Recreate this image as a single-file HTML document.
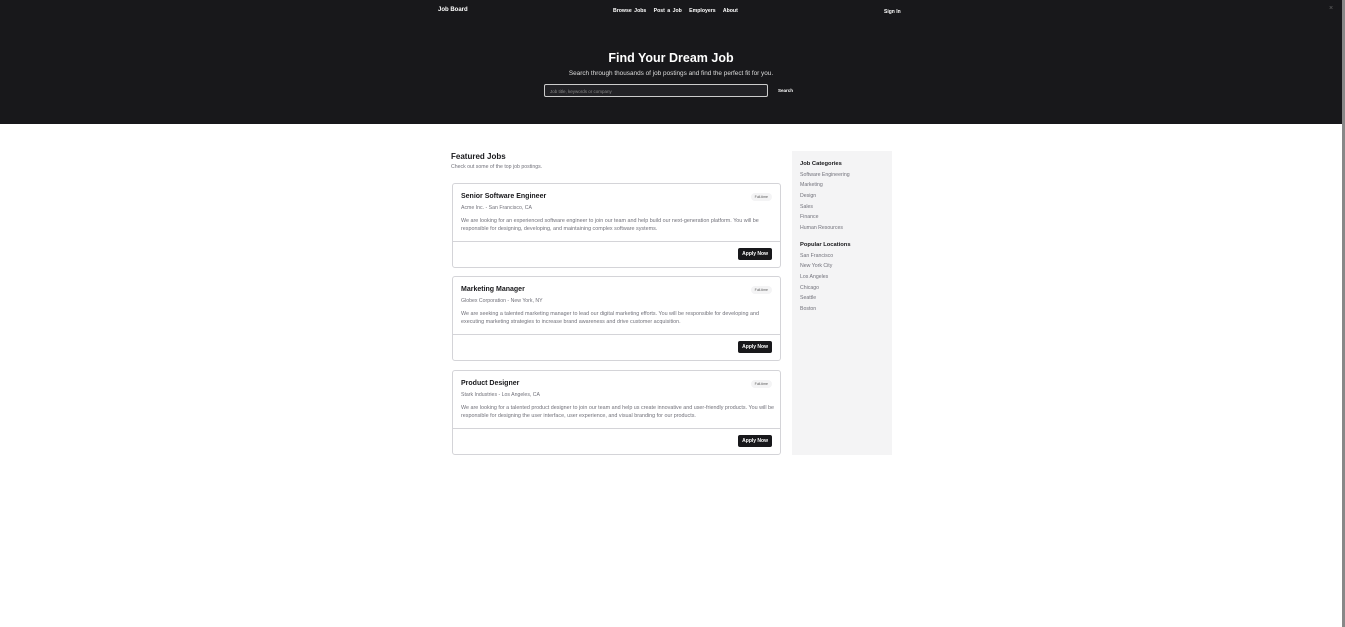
<!DOCTYPE html>
<html><head><meta charset="utf-8"><style>
*{margin:0;padding:0;box-sizing:border-box}
body{width:1345px;height:627px;background:#fff;font-family:"Liberation Sans",sans-serif;position:relative;overflow:hidden}
.hdr{position:absolute;left:0;top:0;width:1342px;height:124px;background:#18181b;color:#fff}
.sb{position:absolute;left:1342px;top:0;width:3px;height:627px;background:#888}
.a{position:absolute;white-space:nowrap}
.card{position:absolute;left:452px;width:329px;height:85px;border:1px solid #d4d4d8;border-radius:3px;background:#fff}
.card .t{position:absolute;left:8px;top:9px;font-size:7px;font-weight:bold;color:#18181b}
.card .c{position:absolute;left:8px;top:21px;font-size:5.2px;color:#71717a}
.card .d{position:absolute;left:8px;top:33px;width:315px;font-size:5.4px;line-height:8px;color:#71717a}
.card .bd{position:absolute;right:8px;top:9px;font-size:3.5px;background:#f4f4f5;border-radius:4px;padding:2px 4px;color:#555}
.card .ln{position:absolute;left:0;right:0;top:57px;border-top:1px solid #d4d4d8}
.card .btn{position:absolute;right:8px;top:64px;background:#18181b;color:#fff;font-size:5px;font-weight:bold;padding:3px 4px;border-radius:2px}
.side{position:absolute;left:792px;top:151px;width:100px;height:304px;background:#f4f4f5}
.side div{position:absolute;left:8px;font-size:5.2px;color:#71717a}
.side .h{font-size:5.8px;font-weight:bold;color:#18181b}
</style></head><body>
<div class="hdr">
<div class="a" style="left:438px;top:7px;font-size:6px;font-weight:bold">Job Board</div>
<div class="a" style="left:613px;top:8px;font-size:5.2px;font-weight:bold;word-spacing:1px">Browse Jobs &nbsp; Post a Job &nbsp; Employers &nbsp; About</div>
<div class="a" style="left:884px;top:9px;font-size:5px;font-weight:bold">Sign In</div>
<div class="a" style="left:1329px;top:5px;font-size:7px;color:#666">×</div>
<div class="a" style="left:0;width:1342px;text-align:center;top:51px;font-size:12.5px;font-weight:bold">Find Your Dream Job</div>
<div class="a" style="left:0;width:1342px;text-align:center;top:70px;font-size:6.4px;color:#ddd">Search through thousands of job postings and find the perfect fit for you.</div>
<div class="a" style="left:544px;top:84px;width:224px;height:13px;border:1px solid #ccc;border-radius:2px;background:#222226;font-size:4.5px;color:#888;padding:4px 5px">Job title, keywords or company</div>
<div class="a" style="left:778px;top:88px;font-size:4.5px;font-weight:bold">Search</div>
</div>
<div class="sb"></div>
<div class="a" style="left:451px;top:152px;font-size:8px;font-weight:bold;color:#18181b">Featured Jobs</div>
<div class="a" style="left:451px;top:164px;font-size:5.2px;color:#71717a">Check out some of the top job postings.</div>

<div class="card" style="top:183px"><div class="t">Senior Software Engineer</div><div class="bd">Full-time</div><div class="c">Acme Inc. - San Francisco, CA</div><div class="d">We are looking for an experienced software engineer to join our team and help build our next-generation platform. You will be responsible for designing, developing, and maintaining complex software systems.</div><div class="ln"></div><div class="btn">Apply Now</div></div>
<div class="card" style="top:276px"><div class="t">Marketing Manager</div><div class="bd">Full-time</div><div class="c">Globex Corporation - New York, NY</div><div class="d">We are seeking a talented marketing manager to lead our digital marketing efforts. You will be responsible for developing and executing marketing strategies to increase brand awareness and drive customer acquisition.</div><div class="ln"></div><div class="btn">Apply Now</div></div>
<div class="card" style="top:370px"><div class="t">Product Designer</div><div class="bd">Full-time</div><div class="c">Stark Industries - Los Angeles, CA</div><div class="d">We are looking for a talented product designer to join our team and help us create innovative and user-friendly products. You will be responsible for designing the user interface, user experience, and visual branding for our products.</div><div class="ln"></div><div class="btn">Apply Now</div></div>

<div class="side">
<div class="h" style="top:10px">Job Categories</div>
<div style="top:21px">Software Engineering</div>
<div style="top:31px">Marketing</div>
<div style="top:42px">Design</div>
<div style="top:53px">Sales</div>
<div style="top:63px">Finance</div>
<div style="top:74px">Human Resources</div>
<div class="h" style="top:91px">Popular Locations</div>
<div style="top:102px">San Francisco</div>
<div style="top:112px">New York City</div>
<div style="top:123px">Los Angeles</div>
<div style="top:134px">Chicago</div>
<div style="top:144px">Seattle</div>
<div style="top:155px">Boston</div>
</div>
</body></html>
